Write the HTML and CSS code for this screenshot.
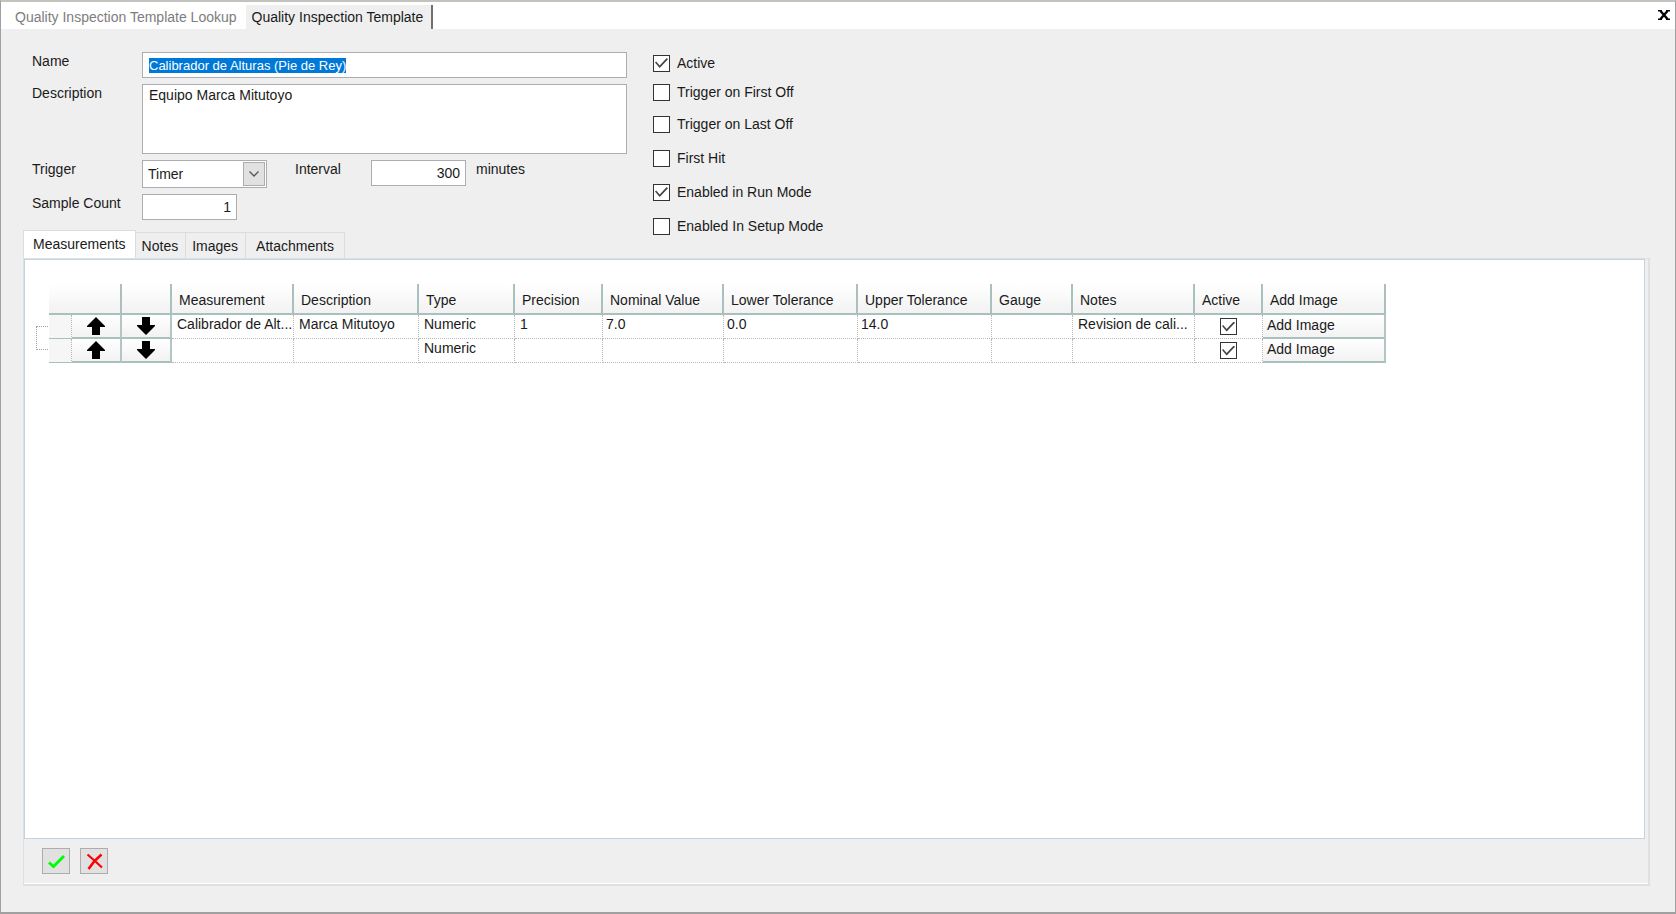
FILE: index.html
```
<!DOCTYPE html>
<html lang="en">
<head>
<meta charset="utf-8">
<title>Quality Inspection Template</title>
<link rel="stylesheet" href="styles.css">
</head>
<body>
<svg class="defs" aria-hidden="true">
  <symbol id="arrow-up" viewBox="0 0 18 18"><path d="M9 0 18 9v1h-5v8H5v-8H0V9z" fill="#000"/></symbol>
  <symbol id="arrow-down" viewBox="0 0 18 18"><path d="M9 18 18 9V8h-5V0H5v8H0v1z" fill="#000"/></symbol>
</svg>
<div class="window">
  <nav class="doc-tabs">
    <button class="doc-tab">Quality Inspection Template Lookup</button>
    <button class="doc-tab current">Quality Inspection Template</button>
    <button class="close" aria-label="Close"><svg width="12" height="10" viewBox="0 0 12 10"><path d="M0 .8h4M8 .8h4M0 9.200h4M8 9.200h4" stroke="#000" stroke-width="1.600"/><path d="M2.500 1 9.500 9M9.500 1 2.500 9" stroke="#000" stroke-width="2.400"/></svg></button>
  </nav>
  <main class="content">
    <form class="form">
      <div class="fields">
        <label for="name">Name</label>
        <input id="name" class="box" type="text" value="Calibrador de Alturas (Pie de Rey)">
        <label for="desc">Description</label>
        <textarea id="desc" class="box">Equipo Marca Mitutoyo</textarea>
        <label for="trigger">Trigger</label>
        <div class="line">
          <div class="combo">
            <select id="trigger" class="box"><option>Timer</option></select>
            <span class="drop"><svg width="10" height="6" viewBox="0 0 10 6"><path d="M.5.5 5 5 9.500.5" fill="none" stroke="#555" stroke-width="1.300"/></svg></span>
          </div>
          <label class="interval" for="interval">Interval</label>
          <input id="interval" class="box number" type="text" value="300">
          <span class="unit">minutes</span>
        </div>
        <label for="count">Sample Count</label>
        <input id="count" class="box number" type="text" value="1">
      </div>
      <div class="checks">
        <label><input type="checkbox" checked>Active</label>
        <label><input type="checkbox">Trigger on First Off</label>
        <label><input type="checkbox">Trigger on Last Off</label>
        <label><input type="checkbox">First Hit</label>
        <label><input type="checkbox" checked>Enabled in Run Mode</label>
        <label><input type="checkbox">Enabled In Setup Mode</label>
      </div>
    </form>
    <div class="tabs" role="tablist">
      <button class="tab selected" role="tab" aria-selected="true">Measurements</button>
      <button class="tab" role="tab">Notes</button>
      <button class="tab" role="tab">Images</button>
      <button class="tab wide" role="tab">Attachments</button>
    </div>
    <section class="panel">
      <div class="sheet">
        <div class="tree"></div>
        <table class="grid">
          <colgroup>
            <col class="w-sel"><col class="w-move"><col class="w-move"><col class="w-meas"><col class="w-desc"><col class="w-type"><col class="w-prec"><col class="w-nom"><col class="w-tol"><col class="w-tol"><col class="w-gauge"><col class="w-notes"><col class="w-active"><col class="w-image">
          </colgroup>
          <thead>
            <tr><th colspan="2"></th><th></th><th>Measurement</th><th>Description</th><th>Type</th><th>Precision</th><th>Nominal Value</th><th>Lower Tolerance</th><th>Upper Tolerance</th><th>Gauge</th><th>Notes</th><th>Active</th><th>Add Image</th></tr>
          </thead>
          <tbody>
            <tr>
              <td class="selector"></td>
              <td class="cell-button"><button aria-label="Move up"><svg width="18" height="18"><use href="#arrow-up"/></svg></button></td>
              <td class="cell-button"><button aria-label="Move down"><svg width="18" height="18"><use href="#arrow-down"/></svg></button></td>
              <td>Calibrador de Alt...</td><td>Marca Mitutoyo</td><td>Numeric</td><td>1</td><td class="value">7.0</td><td class="value">0.0</td><td class="value">14.0</td><td></td><td>Revision de cali...</td>
              <td class="tick"><input type="checkbox" aria-label="Active" checked></td>
              <td class="cell-button"><button class="add">Add Image</button></td>
            </tr>
            <tr>
              <td class="selector"></td>
              <td class="cell-button"><button aria-label="Move up"><svg width="18" height="18"><use href="#arrow-up"/></svg></button></td>
              <td class="cell-button"><button aria-label="Move down"><svg width="18" height="18"><use href="#arrow-down"/></svg></button></td>
              <td></td><td></td><td>Numeric</td><td></td><td class="value"></td><td class="value"></td><td class="value"></td><td></td><td></td>
              <td class="tick"><input type="checkbox" aria-label="Active" checked></td>
              <td class="cell-button"><button class="add">Add Image</button></td>
            </tr>
          </tbody>
        </table>
      </div>
      <div class="actions">
        <button aria-label="Accept"><svg width="18" height="16" viewBox="0 0 18 16"><path d="M2 9.500 6.500 13.500 17 3" fill="none" stroke="#0f0" stroke-width="3"/></svg></button>
        <button aria-label="Cancel"><svg width="17" height="17" viewBox="0 0 17 17"><path d="M1.500 1.500 9.500 8.500 16 14.500" fill="none" stroke="#f00" stroke-width="2.200"/><path d="M15.500 1.500 8.500 8 2.500 16" fill="none" stroke="#f00" stroke-width="2.600"/></svg></button>
      </div>
    </section>
  </main>
</div>
<script src="app.js"></script>
</body>
</html>
```
FILE: app.js
```
const nameField = document.getElementById('name');
nameField.focus();
nameField.select();
```
FILE: styles.css
```
* { box-sizing: border-box; }
body, button, input, select, textarea {
  font: 14px/18px "Liberation Sans", Arial, sans-serif;
  color: #1a1a1a;
}
body { margin: 0; }
button { padding: 0; border: 0; background: none; }
.defs { position: absolute; width: 0; height: 0; }

.window {
  display: flex;
  flex-direction: column;
  min-height: 100vh;
  background: #efefef;
  border: 1px solid #a0a0a0;
  border-top: 2px solid #c3c3bd;
  border-bottom-width: 2px;
}

.doc-tabs {
  display: flex;
  align-items: stretch;
  height: 27px;
  padding: 3px 5px 0 0;
  background: #fff;
}
.doc-tab { padding: 0 9px 1px 14px; color: #7d7d7d; }
.doc-tab.current {
  padding: 0 8px 1px 6px;
  color: #1a1a1a;
  background: #efefef;
  border-right: 2px solid #707070;
}
.close { display: flex; align-items: center; margin-left: auto; padding-bottom: 4px; }

.content {
  flex: 1;
  display: flex;
  flex-direction: column;
  padding: 20px 25px 26px 22px;
}

.form { display: flex; gap: 26px; padding-left: 9px; }
.fields {
  display: grid;
  grid-template-columns: 110px 485px;
  grid-template-rows: 26px 70px 28px 26px;
  row-gap: 6px;
  padding-top: 3px;
}
.box {
  width: 100%;
  height: 100%;
  padding: 0 6px;
  border: 1px solid #abadb3;
  border-radius: 0;
  background: #fff;
  outline: none;
}
#name { font-size: 13px; }
textarea.box { display: block; padding: 1px 6px; resize: none; }
.box::selection { color: #fff; background: #0078d7; }
.box.number { width: 95px; height: 26px; padding-right: 5px; text-align: right; }
.line { display: flex; align-items: flex-start; }
.combo { position: relative; width: 125px; height: 28px; }
.combo select { appearance: none; padding: 0 5px; }
.drop {
  position: absolute;
  inset: 2px 2px 2px auto;
  width: 22px;
  display: flex;
  align-items: center;
  justify-content: center;
  border: 1px solid #adadad;
  background: #e1e1e1;
  pointer-events: none;
}
.interval { width: 76px; margin-left: 28px; }
.unit { margin-left: 10px; }

.checks { display: grid; grid-template-rows: 28px 30px 34px 34px 34px 34px; }
.checks label { display: flex; align-items: center; gap: 7px; }
input[type="checkbox"] {
  appearance: none;
  width: 17px;
  height: 17px;
  margin: 0;
  border: 1px solid #333;
  background: #fff;
  display: grid;
  place-items: center;
}
input[type="checkbox"]:checked::before {
  content: "";
  width: 13px;
  height: 10px;
  background: #444;
  clip-path: polygon(0 45%, 9% 35%, 36% 76%, 90% 0, 100% 12%, 36% 100%);
}

.tabs { display: flex; align-items: flex-end; height: 28px; margin-top: -13px; }
.tab { height: 26px; padding: 0 7px 0 6px; border: 1px solid #dcdcdc; border-left: 0; border-bottom: 0; }
.tab.wide { padding: 0 10px; }
.tab.selected {
  height: 28px;
  padding: 0 9px 2px;
  background: #fff;
  border-left: 1px solid #dcdcdc;
}

.panel {
  flex: 1;
  display: flex;
  flex-direction: column;
  border: 2px solid #e0e0e0;
  border-width: 1px 2px 2px 1px;
}
.sheet {
  flex: 1;
  display: flex;
  align-items: flex-start;
  margin-right: 3px;
  padding: 24px 12px 0 11px;
  background: #fff;
  border: 1px solid #c4d3e0;
}
.tree {
  width: 12px;
  height: 24px;
  margin: 42px 1px 0 0;
  border: 1px dotted #a0a0a0;
  border-right: 0;
}

.grid { width: 1337px; table-layout: fixed; border-collapse: separate; border-spacing: 0; }
.w-sel { width: 23px; }
.w-move { width: 50px; }
.w-meas { width: 122px; }
.w-desc { width: 125px; }
.w-type { width: 96px; }
.w-prec { width: 88px; }
.w-nom { width: 121px; }
.w-tol { width: 134px; }
.w-gauge { width: 81px; }
.w-notes { width: 122px; }
.w-active { width: 68px; }
.w-image { width: 123px; }
.grid th {
  height: 31px;
  padding: 3px 6px 0 7px;
  font-weight: normal;
  text-align: left;
  background: linear-gradient(#fff, #f2f2f2);
  border-right: 2px solid #a9c0be;
  border-bottom: 2px solid #a9c0be;
}
.grid td {
  height: 24px;
  padding: 0 0 5px 5px;
  white-space: nowrap;
  vertical-align: top;
  line-height: 18px;
  border-right: 1px dotted #b8b8b8;
  border-bottom: 1px dotted #b8b8b8;
}
.grid td.value { padding-left: 3px; }
.grid td.selector { background: #f6f6f6; border-bottom: 1px solid #a9c0be; }
.grid td.cell-button { padding: 0; border: 0; }
.cell-button button {
  display: flex;
  align-items: center;
  justify-content: center;
  width: 100%;
  height: 24px;
  background: linear-gradient(#fff, #f2f2f2);
  border-right: 2px solid #b3c6c4;
  border-bottom: 2px solid #a9c0be;
}
.cell-button .add { justify-content: flex-start; padding: 0 0 2px 4px; }
.grid td.tick { padding: 0; vertical-align: middle; }
.tick input { margin: auto; }

.actions { display: flex; gap: 10px; padding: 9px 18px; border-bottom: 1px solid #fff; }
.actions button {
  display: grid;
  place-items: center;
  width: 28px;
  height: 26px;
  background: #e1e1e1;
  border: 1px solid #adadad;
}
```
